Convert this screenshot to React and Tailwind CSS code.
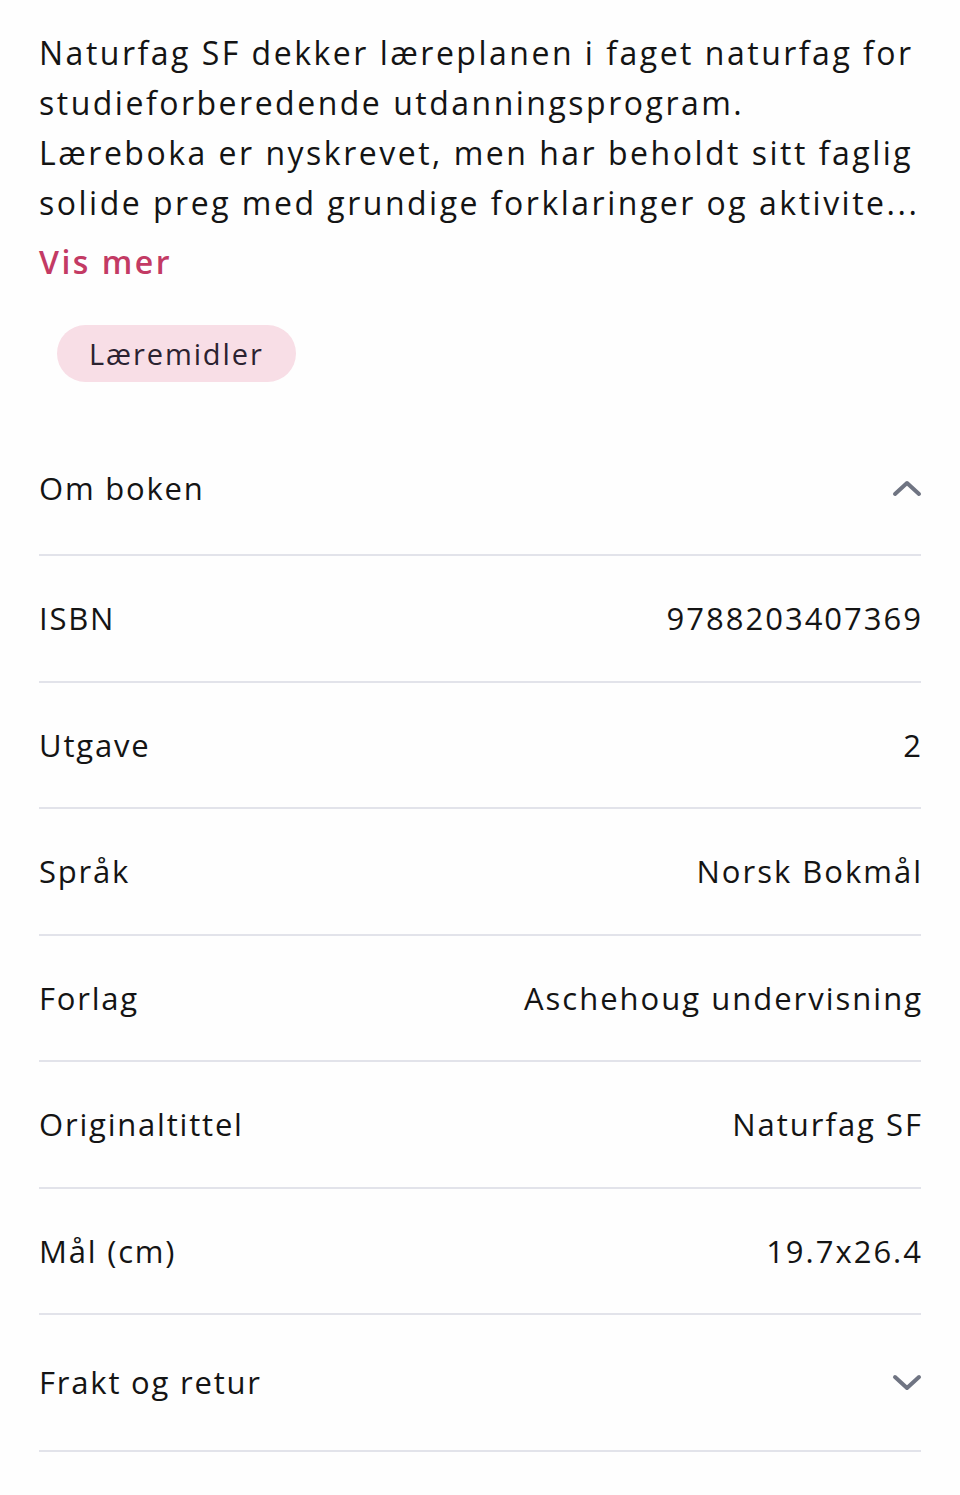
const details = [
  { label: 'ISBN', value: '9788203407369' },
  { label: 'Utgave', value: '2' },
  { label: 'Språk', value: 'Norsk Bokmål' },
  { label: 'Forlag', value: 'Aschehoug undervisning' },
  { label: 'Originaltittel', value: 'Naturfag SF' },
  { label: 'Mål (cm)', value: '19.7x26.4' },
];

// the description is clamped to four lines in the original
const descriptionLines = [
  'Naturfag SF dekker læreplanen i faget naturfag for',
  'studieforberedende utdanningsprogram.',
  'Læreboka er nyskrevet, men har beholdt sitt faglig',
  'solide preg med grundige forklaringer og aktivite...',
];

const Chevron = ({ up }) => (
  <svg width="30" height="20" viewBox="0 0 30 20" className="mr-[-1px]">
    <polyline
      points={up ? '3,16 15,5 27,16' : '3,4 15,15 27,4'}
      fill="none"
      stroke="#6f7482"
      strokeWidth="4"
      strokeLinecap="round"
      strokeLinejoin="round"
    />
  </svg>
);

const App = () => {
  return (
    <div className="min-h-screen bg-[#fefefe] text-[#141414] font-['Open_Sans',sans-serif]">
      <div className="px-[39px] pt-[28px]">
        {/* Description */}
        <p className="text-[32px] leading-[50px] tracking-[2.5px]">
          {descriptionLines.map((line) => (
            <span key={line} className="block whitespace-nowrap">
              {line}
            </span>
          ))}
        </p>
        <button className="mt-[9px] text-[32px] leading-[50px] font-semibold tracking-[2.5px] text-[#c33a64]">
          Vis mer
        </button>

        {/* Tag */}
        <div className="mt-[38px] ml-[18px]">
          <span className="inline-flex items-center h-[57px] px-[32px] rounded-full bg-[#f8dee6] text-[29px] font-medium tracking-[1.9px] text-[#2b2230]">
            Læremidler
          </span>
        </div>

        {/* Om boken */}
        <div className="mt-[40px] flex items-center justify-between h-[134px] border-b-2 border-[#e2e3ea]">
          <span className="text-[31px] tracking-[1.8px]">Om boken</span>
          <Chevron up />
        </div>

        {details.map((row) => (
          <div
            key={row.label}
            className="flex items-center justify-between h-[126.5px] border-b-2 border-[#e2e3ea]"
          >
            <span className="text-[31px] tracking-[1.8px]">{row.label}</span>
            <span className="text-[31px] tracking-[2px] mr-[-2px]">{row.value}</span>
          </div>
        ))}

        {/* Frakt og retur */}
        <div className="flex items-center justify-between h-[137px] border-b-2 border-[#e2e3ea]">
          <span className="text-[31px] tracking-[1.8px]">Frakt og retur</span>
          <Chevron />
        </div>
      </div>
    </div>
  );
};

export default App;
